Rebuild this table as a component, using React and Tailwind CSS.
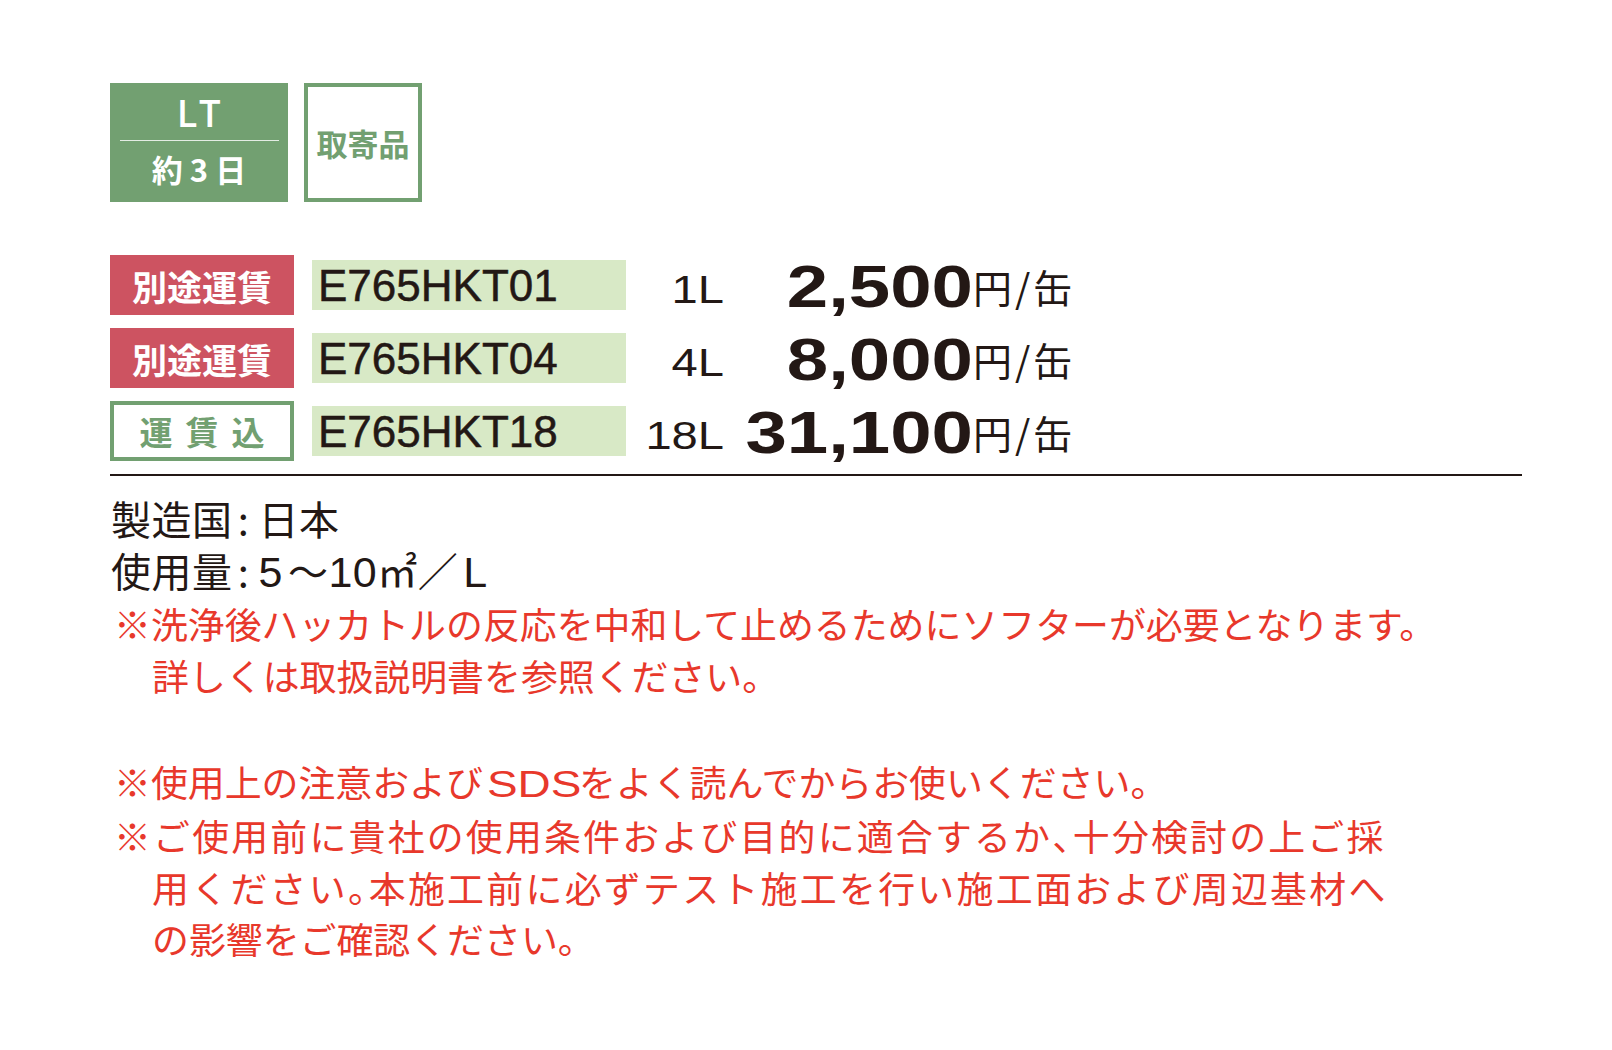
const rows = [
  { type: 'red', code: 'E765HKT01', vol: '1L', price: '2,500' },
  { type: 'red', code: 'E765HKT04', vol: '4L', price: '8,000' },
  { type: 'green', code: 'E765HKT18', vol: '18L', price: '31,100' },
];

function Badge({ type }) {
  if (type === 'red') {
    return (
      <div className="flex h-[60px] w-[184px] shrink-0 items-center justify-center bg-[#cd5361] text-[35px] font-bold leading-none text-white">
        別途運賃
      </div>
    );
  }
  return (
    <div className="flex h-[60px] w-[184px] shrink-0 items-center justify-center gap-[13px] border-4 border-[#72a071] text-[33px] font-bold leading-none text-[#72a071]">
      <span>運</span>
      <span>賃</span>
      <span>込</span>
    </div>
  );
}

export default function App() {
  return (
    <div className="min-h-screen w-full bg-white font-['Noto_Sans_CJK_JP',sans-serif] text-[#231815]">
      <div className="pl-[110px] pt-[83px]">
        {/* top boxes */}
        <div className="flex gap-[16px]">
          <div className="flex h-[119px] w-[178px] flex-col items-center bg-[#72a071] text-white">
            <div className="flex h-[57px] items-center pl-[6px] text-[37px] font-medium leading-none tracking-[6px]">
              LT
            </div>
            <div className="h-px w-[159px] bg-white/80" />
            <div className="flex h-[54px] items-center pl-[7px] text-[31px] font-bold leading-none tracking-[7px]">
              約3日
            </div>
          </div>
          <div className="flex h-[119px] w-[118px] items-center justify-center border-4 border-[#72a071] text-[31px] font-bold leading-none text-[#72a071]">
            取寄品
          </div>
        </div>

        {/* price rows */}
        <div className="mt-[53px] flex flex-col gap-[13px]">
          {rows.map((r) => (
            <div key={r.code} className="flex h-[60px] items-center">
              <Badge type={r.type} />
              <div className="ml-[18px] h-[50px] w-[314px] shrink-0 bg-[#d8e9c6] pl-[6px] pt-[2px] font-['Liberation_Sans',sans-serif] text-[44px] leading-[48px] [-webkit-text-stroke:0.5px_#231815]">
                {r.code}
              </div>
              <div className="flex h-[60px] items-baseline">
                <span className="w-[98px] origin-right scale-x-[1.24] text-right font-['Liberation_Sans',sans-serif] text-[38px] leading-[56px]">
                  {r.vol}
                </span>
                <span className="w-[249px] origin-right translate-y-[4px] scale-x-[1.24] text-right font-['Liberation_Sans',sans-serif] text-[60px] font-bold leading-[56px]">
                  {r.price}
                </span>
                <span className="text-[39px] leading-[56px] tracking-[3px]">円/缶</span>
              </div>
            </div>
          ))}
        </div>

        <div className="mt-[13px] h-[2px] w-[1412px] bg-[#231815]" />

        {/* notes */}
        <div className="mt-[17px] whitespace-nowrap">
          <div className="text-[40px] leading-[51.5px] tracking-[0.5px]">
            <div className="pl-[1px]">
              製造国<span className="inline-block w-[26px] pr-[4px] text-center">:</span>日本
            </div>
            <div className="pl-[1px]">
              使用量<span className="inline-block w-[26px] pr-[4px] text-center">:</span>
              <span className="font-['Liberation_Sans',sans-serif] text-[43px]">5</span>
              <span className="ml-[5px]">〜</span>
              <span className="font-['Liberation_Sans',sans-serif] text-[43px]">10</span>
              ㎡／
              <span className="ml-[5px] font-['Liberation_Sans',sans-serif] text-[43px]">L</span>
            </div>
          </div>

          <div className="text-[36.9px] leading-[51.5px] text-[#e8382b]">
            <div className="pl-[4px]">
              ※洗浄後ハッカトルの反応を中和して止めるためにソフターが必要となります。
            </div>
            <div className="pl-[42px]">詳しくは取扱説明書を参照ください。</div>
          </div>

          <div className="mt-[54.5px] text-[36.9px] leading-[51.5px] text-[#e8382b]">
            <div className="pl-[4px]">
              ※使用上の注意および
              <span className="inline-block w-[96px] pl-[4px]">
                <span className="inline-block origin-left scale-x-[1.24] font-['Liberation_Sans',sans-serif] text-[37px]">
                  SDS
                </span>
              </span>
              をよく読んでからお使いください。
            </div>
            <div className="pl-[4px] tracking-[2.2px]">
              ※ご使用前に貴社の使用条件および目的に適合するか
              <span className="[font-feature-settings:'halt']">、</span>
              十分検討の上ご採
            </div>
            <div className="pl-[42px] tracking-[2.3px]">
              用ください
              <span className="[font-feature-settings:'halt']">。</span>
              本施工前に必ずテスト施工を行い施工面および周辺基材へ
            </div>
            <div className="pl-[42px]">の影響をご確認ください。</div>
          </div>
        </div>
      </div>
    </div>
  );
}
